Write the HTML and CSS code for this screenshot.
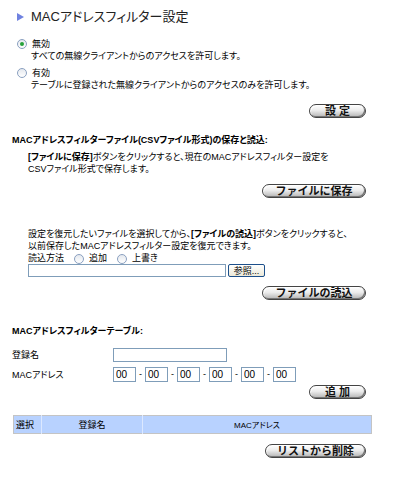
FILE: index.html
```html
<!DOCTYPE html>
<html lang="ja">
<head>
    <meta charset="UTF-8">
    <title>MACアドレスフィルター設定</title>
    <link rel="stylesheet" href="styles.css">
</head>
<body>
    <div class="page">
        <h1 class="title"><span class="arrow"></span>MACアドレスフィルター設定</h1>

        <div class="option first">
            <div class="option-head"><span class="radio on"></span>無効</div>
            <div class="option-desc">すべての無線クライアントからのアクセスを許可します。</div>
        </div>
        <div class="option second">
            <div class="option-head"><span class="radio"></span>有効</div>
            <div class="option-desc">テーブルに登録された無線クライアントからのアクセスのみを許可します。</div>
        </div>

        <div class="btn-row r-set"><button class="pill narrow">設 定</button></div>

        <h2 class="head h-file">MACアドレスフィルターファイル(CSVファイル形式)の保存と読込:</h2>
        <p class="note n-save"><b>[ファイルに保存]</b>ボタンをクリックすると、現在のMACアドレスフィルター設定を<br>CSVファイル形式で保存します。</p>
        <div class="btn-row r-save"><button class="pill wide">ファイルに保存</button></div>

        <p class="note n-load">設定を復元したいファイルを選択してから、<b>[ファイルの読込]</b>ボタンをクリックすると、<br>以前保存したMACアドレスフィルター設定を復元できます。</p>
        <div class="method">読込方法<span class="radio"></span>追加<span class="radio"></span>上書き</div>
        <div class="file-row"><input type="text" class="file-box"><button class="browse">参照...</button></div>
        <div class="btn-row r-load"><button class="pill wide">ファイルの読込</button></div>

        <h2 class="head h-table">MACアドレスフィルターテーブル:</h2>
        <div class="field f-name"><label>登録名</label><input type="text" class="name-box"></div>
        <div class="field f-mac">
            <label>MACアドレス</label>
            <input type="text" class="mac" value="00"><span class="sep">-</span>
            <input type="text" class="mac" value="00"><span class="sep">-</span>
            <input type="text" class="mac" value="00"><span class="sep">-</span>
            <input type="text" class="mac" value="00"><span class="sep">-</span>
            <input type="text" class="mac" value="00"><span class="sep">-</span>
            <input type="text" class="mac" value="00">
        </div>
        <div class="btn-row r-add"><button class="pill narrow">追 加</button></div>

        <table class="list">
            <tr><th class="c-sel">選択</th><th class="c-name">登録名</th><th class="c-mac">MACアドレス</th></tr>
        </table>
        <div class="btn-row r-del"><button class="pill wide">リストから削除</button></div>
    </div>
</body>
</html>
```

FILE: styles.css
```css
body { margin: 0; background: #fff; color: #000; font-family: "Liberation Sans", "Noto Sans CJK JP", sans-serif; font-size: 9px; font-feature-settings: "palt"; }
.page { width: 400px; padding-left: 12px; box-sizing: border-box; }
.title { margin: 8px 0 0 5px; font-size: 13px; line-height: 18px; font-weight: normal; color: #222; display: flex; align-items: center; }
.arrow { width: 0; height: 0; border-left: 7px solid #6f82e0; border-top: 4px solid transparent; border-bottom: 4px solid transparent; margin-right: 7px; }

.option { margin-left: 5px; line-height: 12px; }
.option.first { margin-top: 12px; }
.option.second { margin-top: 5px; }
.option-head { display: flex; align-items: center; }
.option-desc { padding-left: 14px; }
.radio { display: inline-block; width: 8px; height: 8px; border: 1px solid #8aa0c0; border-radius: 50%; background: linear-gradient(#e4e8ee, #fff); margin-right: 5px; position: relative; }
.radio.on::after { content: ""; position: absolute; left: 2px; top: 2px; width: 4px; height: 4px; border-radius: 50%; background: #26a23a; }

.btn-row { display: flex; justify-content: flex-end; padding-right: 34px; }
.pill { height: 14px; padding: 0; border: 1px solid #444; border-radius: 7px; background: linear-gradient(#ffffff, #ececec 45%, #b4b4b4); box-shadow: inset -1px -1px 0 #777, inset 1px 1px 0 #fff; font-family: "Liberation Sans", "Noto Sans CJK JP", sans-serif; font-size: 11px; font-weight: bold; line-height: 12px; color: #111; }
.pill.narrow { width: 57px; }
.pill.wide { width: 104px; }
.r-set { margin-top: 13px; }
.r-save { margin-top: 9px; }
.r-load { margin-top: 9px; }
.r-add { margin-top: 3px; }
.r-del { margin-top: 10px; }
.r-del .pill { width: 101px; }

.head { margin: 0; font-size: 9px; line-height: 12px; font-weight: bold; }
.h-file { margin-top: 16px; }
.h-table { margin-top: 25px; }
.note { margin: 0 0 0 16px; line-height: 12px; }
.n-save { margin-top: 5px; }
.n-load { margin-top: 30px; }

.method { margin: 1px 0 0 16px; line-height: 11px; display: flex; align-items: center; }
.method .radio { margin-left: 10px; }
.file-row { margin-left: 16px; display: flex; align-items: center; height: 13px; }
.file-box { width: 198px; height: 13px; box-sizing: border-box; border: 1px solid #7f9db9; padding: 0; margin: 0; }
.browse { margin-left: 2px; width: 37px; height: 13px; padding: 0; border: 1px solid #1c4f8a; border-radius: 2px; background: linear-gradient(#fff, #ece9d8); font-family: "Liberation Sans", "Noto Sans CJK JP", sans-serif; font-size: 9px; line-height: 10px; color: #000; }

.field { display: flex; align-items: center; }
.field label { width: 101px; line-height: 12px; }
.f-name { margin-top: 11px; }
.f-mac { margin-top: 5px; }
.name-box { width: 114px; height: 14px; box-sizing: border-box; border: 1px solid #7f9db9; padding: 0; margin: 0; }
.mac { width: 23px; height: 15px; box-sizing: border-box; border: 1px solid #7f9db9; padding: 0 0 0 2px; margin: 0; font-family: "Liberation Sans", sans-serif; font-size: 10px; }
.sep { width: 9px; text-align: center; line-height: 15px; }

.list { margin: 16px 0 0 1px; width: 359px; border-collapse: collapse; border: 1px solid #c4c4c4; }
.list th { height: 17px; padding: 0; background: #b8d2ff; border-left: 1px solid #dce8ff; font-size: 9px; font-weight: normal; }
.list .c-sel { width: 25px; text-align: left; padding-left: 2px; border-left: none; }
.list .c-name { width: 100px; }
.list .c-mac { font-size: 8px; }
```
